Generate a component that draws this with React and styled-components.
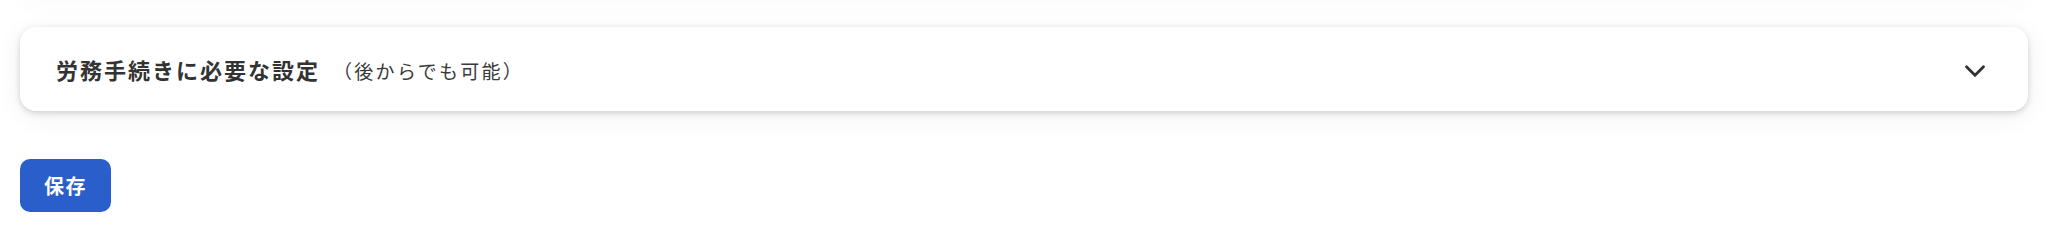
import React from 'react';
import styled, { createGlobalStyle } from 'styled-components';

const GlobalStyle = createGlobalStyle`
  html, body {
    margin: 0;
    padding: 0;
    background: #fff;
    overflow: hidden;
  }
  body {
    font-family: "Noto Sans CJK JP", "Noto Sans", sans-serif;
    color: #333;
  }
`;

const Page = styled.div`
  padding: 0 20px 30px;
`;

// previous section sits just above the viewport; only its shadow shows
const Stack = styled.div`
  display: flex;
  flex-direction: column;
  gap: 36px;
  margin-top: -19px;
`;

const Card = styled.section`
  background: #fff;
  border-radius: 16px;
  box-shadow: 0 2px 6px rgba(0, 0, 0, 0.16), 0 6px 28px rgba(0, 0, 0, 0.06);
  height: ${p => p.$height || 84}px;
`;

const Header = styled.button`
  all: unset;
  box-sizing: border-box;
  width: 100%;
  height: 100%;
  display: flex;
  align-items: center;
  justify-content: space-between;
  padding: 0 36px 0 36px;
  cursor: pointer;
`;

const TitleWrap = styled.div`
  display: flex;
  align-items: baseline;
`;

const Title = styled.h2`
  margin: 0;
  font-size: 22px;
  font-weight: 700;
  letter-spacing: 2px;
  color: #333;
`;

const Note = styled.span`
  margin-left: 13px;
  font-size: 19px;
  font-weight: 400;
  letter-spacing: 2.3px;
  color: #3a3a3a;
`;

const Chevron = styled.svg`
  width: 34px;
  height: 34px;
  color: #333;
  margin-top: 4px;
`;

const Actions = styled.div`
  margin-top: 48px;
  display: flex;
`;

const SaveButton = styled.button`
  height: 53px;
  padding: 0 24px;
  border: none;
  border-radius: 10px;
  background: #2a5ecb;
  color: #fff;
  font-family: "Noto Sans CJK JP", sans-serif;
  font-size: 20px;
  font-weight: 700;
  letter-spacing: 1.5px;
  cursor: pointer;
`;

export default function App() {
  return (
    <>
      <GlobalStyle />
      <Page>
        <Stack>
          <Card $height={10} />
          <Card>
            <Header>
              <TitleWrap>
                <Title>労務手続きに必要な設定</Title>
                <Note>（後からでも可能）</Note>
              </TitleWrap>
              <Chevron viewBox="0 0 24 24" fill="none" stroke="currentColor" strokeWidth="2" strokeLinecap="round" strokeLinejoin="round">
                <path d="m6 9 6 6 6-6" />
              </Chevron>
            </Header>
          </Card>
        </Stack>
        <Actions>
          <SaveButton>保存</SaveButton>
        </Actions>
      </Page>
    </>
  );
}
